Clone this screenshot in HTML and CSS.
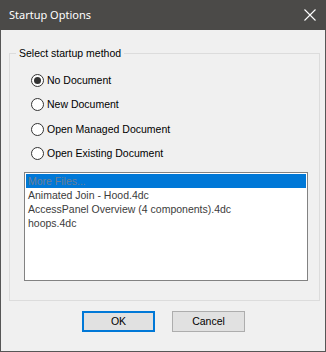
FILE: index.html
```html
<!DOCTYPE html>
<html>
<head>
<meta charset="utf-8">
<title>Startup Options</title>
<link rel="stylesheet" href="styles.css">
</head>
<body>
	<div class="win">
		<div class="titlebar">
			<span class="title">Startup Options</span>
			<svg class="close" width="12" height="12" viewBox="0 0 12 12">
				<path d="M0.5 0.5 L11.5 11.5 M11.5 0.5 L0.5 11.5" stroke="#fff" stroke-width="1.1" fill="none"/>
			</svg>
		</div>
		<div class="content">
			<fieldset class="group">
				<legend>Select startup method</legend>
				<div class="radios">
					<label class="radio"><span class="dot on"></span>No Document</label>
					<label class="radio"><span class="dot"></span>New Document</label>
					<label class="radio"><span class="dot"></span>Open Managed Document</label>
					<label class="radio"><span class="dot"></span>Open Existing Document</label>
				</div>
				<ul class="files">
					<li class="sel">More Files...</li>
					<li>Animated Join - Hood.4dc</li>
					<li>AccessPanel Overview (4 components).4dc</li>
					<li>hoops.4dc</li>
				</ul>
			</fieldset>
			<div class="buttons">
				<div class="btn default">OK</div>
				<div class="btn">Cancel</div>
			</div>
		</div>
	</div>
</body>
</html>
```

FILE: styles.css
```css
*{margin:0; padding:0; list-style:none; box-sizing:border-box;}
body{background:#f0f0f0; font-family:"Liberation Sans", Arial, sans-serif; font-size:10.5px; color:#000;}

.win{width:326px; height:352px; border:1px solid #565656; border-top:none; background:#f0f0f0; display:flex; flex-direction:column;}

.titlebar{height:30px; margin:0 -1px; background:#4b4a48; display:flex; align-items:center; justify-content:space-between; padding:0 10px 0 9px;}
.titlebar .title{color:#fff; font-family:"Noto Sans", "Open Sans", sans-serif; font-size:11px; line-height:16px; margin-top:-1px;}
.titlebar .close{display:block; margin-top:-1px;}

.content{flex:1; display:flex; flex-direction:column; padding:0 6px 0 8px;}

.group{margin-top:17px; width:311px; border:1px solid #dcdcdc; padding:0 10px 19px 14px;}
.group legend{margin-left:-8px; padding:0 3px; line-height:13px; color:#000;}

.radios{display:flex; flex-direction:column; padding-left:7px; margin-top:8px;}
.radio{height:24.5px; display:flex; align-items:center; color:#000; line-height:13px;}
.radio .dot{width:13px; height:13px; border:1px solid #333; border-radius:50%; background:#fff; margin-right:3px; display:flex; align-items:center; justify-content:center;}
.radio .dot.on::after{content:""; width:7px; height:7px; border-radius:50%; background:#333;}

.files{margin-top:6px; height:109px; width:284px; border:1px solid #828282; background:#fff; padding:1px;}
.files li{height:14px; line-height:14px; padding-left:2px; color:#3c3c3c; white-space:nowrap;}
.files li.sel{background:#0078d7; color:#6c7f95;}

.buttons{display:flex; justify-content:center; gap:17px; margin-top:10px; padding-right:1px;}
.btn{width:73px; height:21px; border:1px solid #adadad; background:#e1e1e1; text-align:center; line-height:19px; color:#000;}
.btn.default{border:2px solid #0078d7; line-height:17px;}
```
